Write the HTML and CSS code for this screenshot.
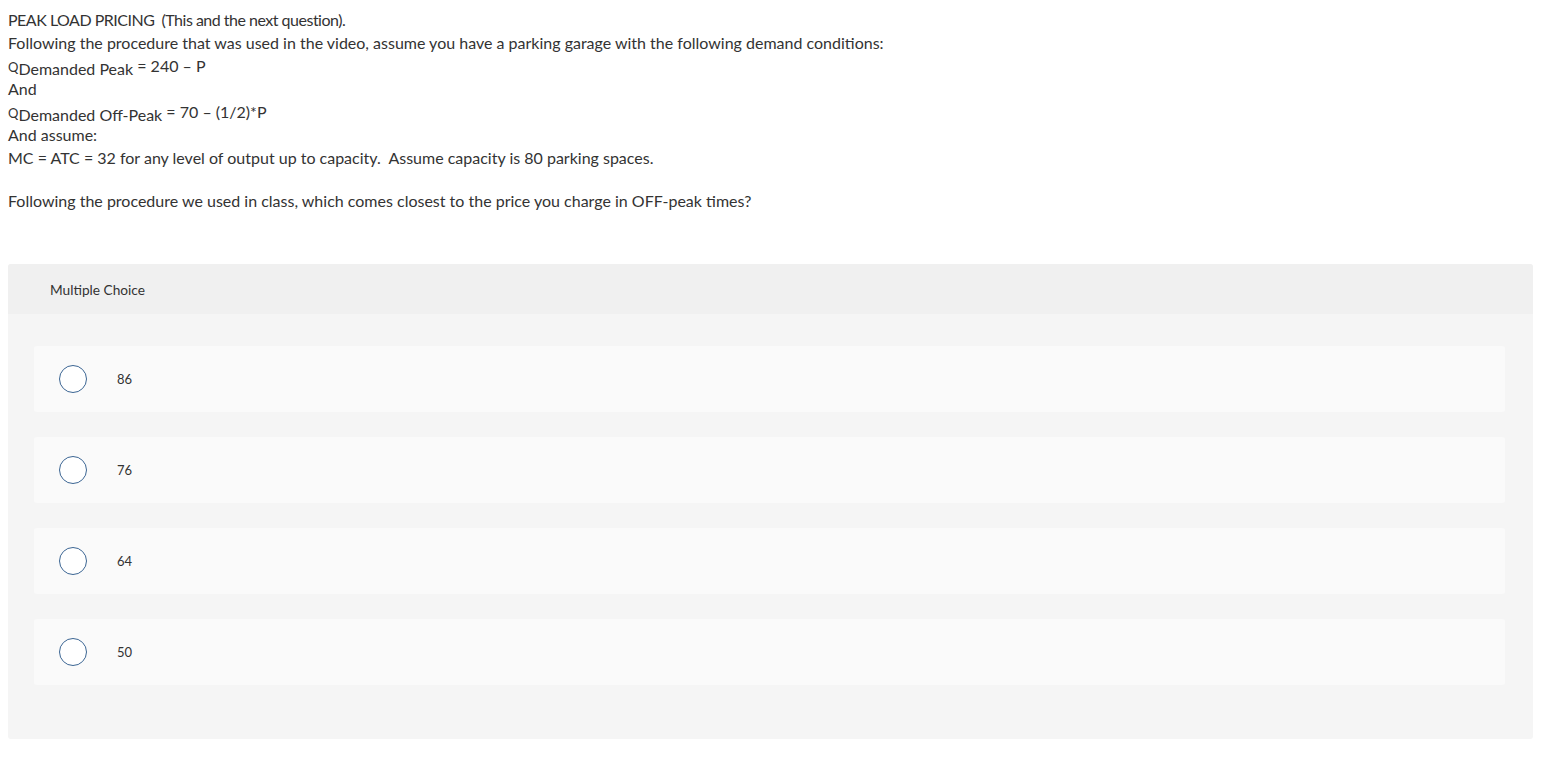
FILE: index.html
```html
<!DOCTYPE html>
<html>
<head>
<meta charset="utf-8">
<link rel="stylesheet" href="styles.css">
</head>
<body>
<div class="question">
  <p class="title">PEAK LOAD PRICING&nbsp; (This and the next question).</p>
  <p>Following the procedure that was used in the video, assume you have a parking garage with the following demand conditions:</p>
  <p class="eq"><span class="q">Q</span><sub>Demanded Peak</sub> = 240 – P</p>
  <p>And</p>
  <p class="eq"><span class="q">Q</span><sub>Demanded Off-Peak</sub> = 70 – (1/2)*P</p>
  <p>And assume:</p>
  <p>MC = ATC = 32 for any level of output up to capacity.&nbsp; Assume capacity is 80 parking spaces.</p>
  <p class="blank">&nbsp;</p>
  <p>Following the procedure we used in class, which comes closest to the price you charge in OFF-peak times?</p>
</div>
<div class="panel">
  <div class="panel-head">Multiple Choice</div>
  <div class="panel-body">
    <div class="option"><span class="radio"></span><span class="label">86</span></div>
    <div class="option"><span class="radio"></span><span class="label">76</span></div>
    <div class="option"><span class="radio"></span><span class="label">64</span></div>
    <div class="option"><span class="radio"></span><span class="label">50</span></div>
  </div>
</div>
</body>
</html>
```
FILE: styles.css
```css
html, body {
  margin: 0;
  background: #ffffff;
}
body {
  padding: 8px 8px 0 8px;
  font-family: Lato, "Liberation Sans", sans-serif;
  color: #333333;
}
.question {
  font-size: 16px;
  line-height: 23px;
}
.question p {
  margin: 0;
  height: 23px;
}
.question .title {
  letter-spacing: -0.5px;
}
.question .blank {
  height: 20px;
  line-height: 20px;
}
.eq .q {
  font-size: 13px;
}
.eq sub {
  font-size: 16px;
  vertical-align: -3px;
  line-height: 0;
}
.panel {
  margin-top: 52px;
  width: 1525px;
  border-radius: 3px;
  overflow: hidden;
  background: #f5f5f5;
}
.panel-head {
  height: 50px;
  background: #f0f0f0;
  display: flex;
  align-items: center;
  padding-left: 42px;
  font-size: 13.7px;
  color: #333333;
}
.panel-body {
  padding: 32px 28px 54px 26px;
  display: flex;
  flex-direction: column;
  gap: 25px;
}
.option {
  height: 66px;
  background: #fafafa;
  border-radius: 3px;
  display: flex;
  align-items: center;
  padding-left: 25px;
}
.radio {
  width: 26px;
  height: 26px;
  border: 1px solid #3b6593;
  border-radius: 50%;
  background: #ffffff;
  flex: none;
}
.label {
  margin-left: 30px;
  font-size: 13px;
  color: #333333;
}
```
